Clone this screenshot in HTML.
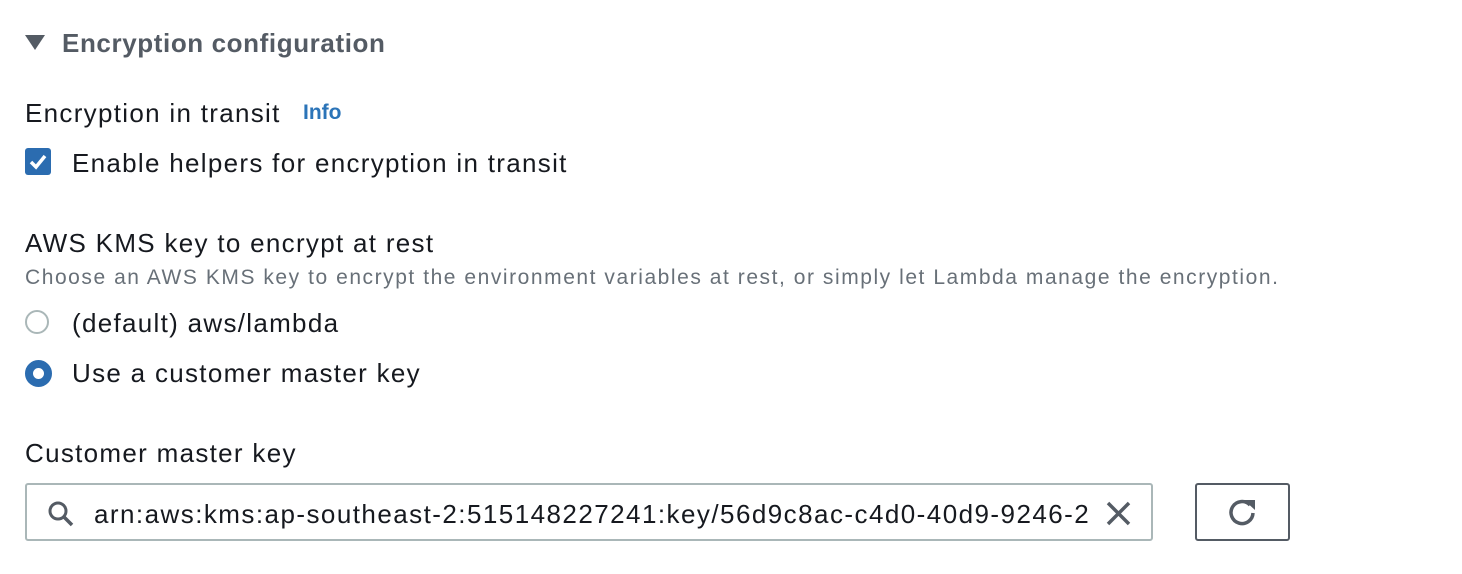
<!DOCTYPE html>
<html><head><style>
body{margin:0;width:1462px;height:574px;background:#fff;font-family:"Liberation Sans",sans-serif;color:#16191f;position:relative;overflow:hidden}
.a{position:absolute;white-space:nowrap}
.t{font-size:26px;letter-spacing:1.3px}
</style></head><body>
<svg class="a" style="left:25px;top:35px" width="20" height="16"><polygon points="0,0 20,0 10,15" fill="#545b64"/></svg>
<div class="a" style="left:62px;top:28px;font-size:26px;font-weight:bold;color:#545b64;letter-spacing:0.6px">Encryption configuration</div>
<div class="a t" style="left:25px;top:98px">Encryption in transit</div>
<div class="a" style="left:303px;top:101px;font-size:21px;font-weight:bold;color:#2b74b8">Info</div>
<div class="a" style="left:25px;top:148px;width:26px;height:27px;background:#2b6cb0;border-radius:3px"></div>
<svg class="a" style="left:25px;top:148px" width="26" height="27"><path d="M6 14 L11 19 L20 8" stroke="#fff" stroke-width="3.5" fill="none"/></svg>
<div class="a t" style="left:72px;top:148px">Enable helpers for encryption in transit</div>
<div class="a t" style="left:25px;top:228px">AWS KMS key to encrypt at rest</div>
<div class="a" style="left:25px;top:266px;font-size:21px;letter-spacing:1.55px;color:#687078">Choose an AWS KMS key to encrypt the environment variables at rest, or simply let Lambda manage the encryption.</div>
<div class="a" style="left:25px;top:310px;width:24px;height:24px;border:2px solid #aab7b8;border-radius:50%;box-sizing:border-box"></div>
<div class="a t" style="left:72px;top:308px">(default) aws/lambda</div>
<div class="a" style="left:25px;top:360px;width:27px;height:27px;border:8px solid #2b6cb0;border-radius:50%;box-sizing:border-box"></div>
<div class="a t" style="left:72px;top:358px">Use a customer master key</div>
<div class="a t" style="left:25px;top:438px">Customer master key</div>
<div class="a" style="left:25px;top:483px;width:1128px;height:58px;border:2px solid #aab7b8;border-radius:3px;box-sizing:border-box;overflow:hidden">
<svg class="a" style="left:20px;top:15px" width="30" height="30"><circle cx="11" cy="11" r="8" stroke="#545b64" stroke-width="3" fill="none"/><path d="M17 17 L25 25" stroke="#545b64" stroke-width="3.5"/></svg>
<div class="a t" style="left:67px;top:14px;width:994px;overflow:hidden;letter-spacing:1.45px">arn:aws:kms:ap-southeast-2:515148227241:key/56d9c8ac-c4d0-40d9-9246-2aa1b2c3d4e5</div>
<svg class="a" style="left:1078px;top:15px" width="28" height="28"><path d="M3 3 L24 24 M24 3 L3 24" stroke="#545b64" stroke-width="3.5"/></svg>
</div>
<div class="a" style="left:1195px;top:483px;width:95px;height:58px;border:2px solid #545b64;border-radius:3px;box-sizing:border-box"></div>
<svg class="a" style="left:1225px;top:496px" width="34" height="32"><path d="M25 9 A11 11 0 1 0 28 17" stroke="#545b64" stroke-width="3.5" fill="none"/><polygon points="19,4 30,4 30,14" fill="#545b64"/></svg>
</body></html>
